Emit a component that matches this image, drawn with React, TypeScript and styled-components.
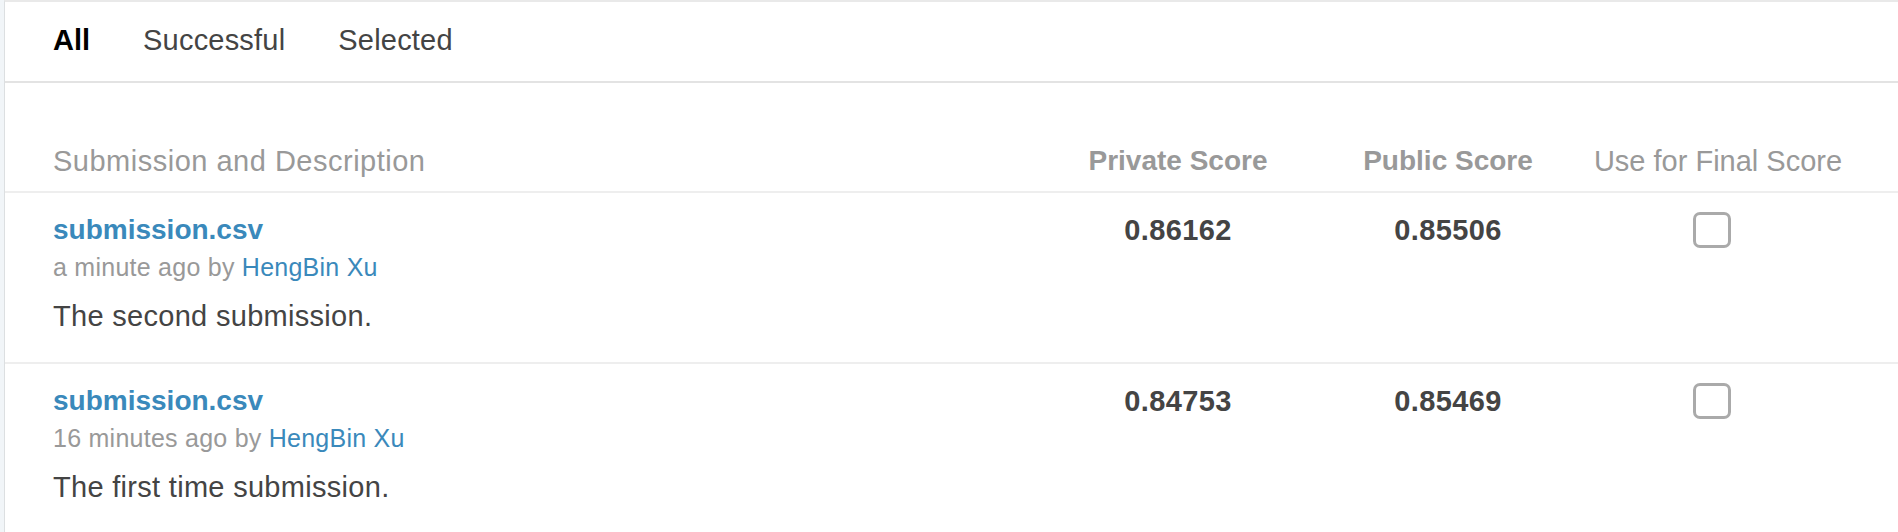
import * as React from 'react';
import styled, { createGlobalStyle } from 'styled-components';

const GlobalStyle = createGlobalStyle`
  html, body {
    margin: 0;
    padding: 0;
    background: #f1f5f8;
  }
  body {
    font-family: "Liberation Sans", Arial, sans-serif;
  }
`;

const Card = styled.div`
  margin-left: 4px;
  background: #fff;
  border-left: 1px solid #dcdfe1;
  border-top: 2px solid #e9e9e9;
  min-height: 530px;
`;

const Tabs = styled.div`
  display: flex;
  gap: 53px;
  padding: 21px 48px 24px;
  border-bottom: 2px solid #e3e3e3;
`;

const Tab = styled.span<{ active?: boolean }>`
  font-size: 29px;
  line-height: 34px;
  font-weight: ${(p) => (p.active ? 700 : 400)};
  color: ${(p) => (p.active ? '#000' : '#444')};
  letter-spacing: ${(p) => (p.active ? 0 : 0.2)}px;
`;

const Grid = styled.div`
  display: grid;
  grid-template-columns: 1fr 270px 270px 270px;
  padding: 0 45px 0 48px;
`;

const HeadRow = styled(Grid)`
  padding-top: 61px;
  padding-bottom: 13px;
  border-bottom: 2px solid #eeeeee;
`;

const HeadCell = styled.div<{ bold?: boolean; center?: boolean }>`
  font-size: ${(p) => (p.bold ? 28 : 29)}px;
  line-height: 34px;
  font-weight: ${(p) => (p.bold ? 700 : 400)};
  color: #999;
  text-align: ${(p) => (p.center ? 'center' : 'left')};
  letter-spacing: ${(p) => (p.center ? 0 : 0.5)}px;
  white-space: nowrap;
`;

const Row = styled(Grid)`
  padding-top: 20px;
  padding-bottom: 29px;
  & + & {
    border-top: 2px solid #eeeeee;
  }
`;

const Info = styled.div`
  display: flex;
  flex-direction: column;
`;

const FileName = styled.a`
  font-size: 28px;
  line-height: 34px;
  font-weight: 700;
  color: #3a89bb;
  text-decoration: none;
`;

const Meta = styled.div`
  margin-top: 4px;
  font-size: 25px;
  line-height: 32px;
  color: #999;
  letter-spacing: 0.25px;
`;

const Author = styled.a`
  color: #3a89bb;
  text-decoration: none;
`;

const Description = styled.div`
  margin-top: 16px;
  font-size: 29px;
  line-height: 34px;
  color: #444;
  letter-spacing: 0.3px;
`;

const Score = styled.div`
  font-size: 29px;
  line-height: 34px;
  font-weight: 700;
  color: #444;
  text-align: center;
  letter-spacing: 0.4px;
`;

const CheckCell = styled.div`
  display: flex;
  justify-content: center;
  padding-right: 12px;
`;

const CheckBox = styled.span`
  display: block;
  box-sizing: border-box;
  width: 38px;
  height: 36px;
  margin-top: -1px;
  border: 3px solid #aaa;
  border-radius: 7px;
  background: #fff;
`;

type Submission = {
  file: string;
  when: string;
  author: string;
  description: string;
  privateScore: string;
  publicScore: string;
};

const submissions: Submission[] = [
  {
    file: 'submission.csv',
    when: 'a minute ago',
    author: 'HengBin Xu',
    description: 'The second submission.',
    privateScore: '0.86162',
    publicScore: '0.85506',
  },
  {
    file: 'submission.csv',
    when: '16 minutes ago',
    author: 'HengBin Xu',
    description: 'The first time submission.',
    privateScore: '0.84753',
    publicScore: '0.85469',
  },
];

export default function App() {
  return (
    <>
      <GlobalStyle />
      <Card>
        <Tabs>
          <Tab active>All</Tab>
          <Tab>Successful</Tab>
          <Tab>Selected</Tab>
        </Tabs>

        <HeadRow>
          <HeadCell>Submission and Description</HeadCell>
          <HeadCell bold center>Private Score</HeadCell>
          <HeadCell bold center>Public Score</HeadCell>
          <HeadCell center>Use for Final Score</HeadCell>
        </HeadRow>

        {submissions.map((s, i) => (
          <Row key={i}>
            <Info>
              <FileName href="#">{s.file}</FileName>
              <Meta>
                {s.when} by <Author href="#">{s.author}</Author>
              </Meta>
              <Description>{s.description}</Description>
            </Info>
            <Score>{s.privateScore}</Score>
            <Score>{s.publicScore}</Score>
            <CheckCell>
              <CheckBox />
            </CheckCell>
          </Row>
        ))}
      </Card>
    </>
  );
}
